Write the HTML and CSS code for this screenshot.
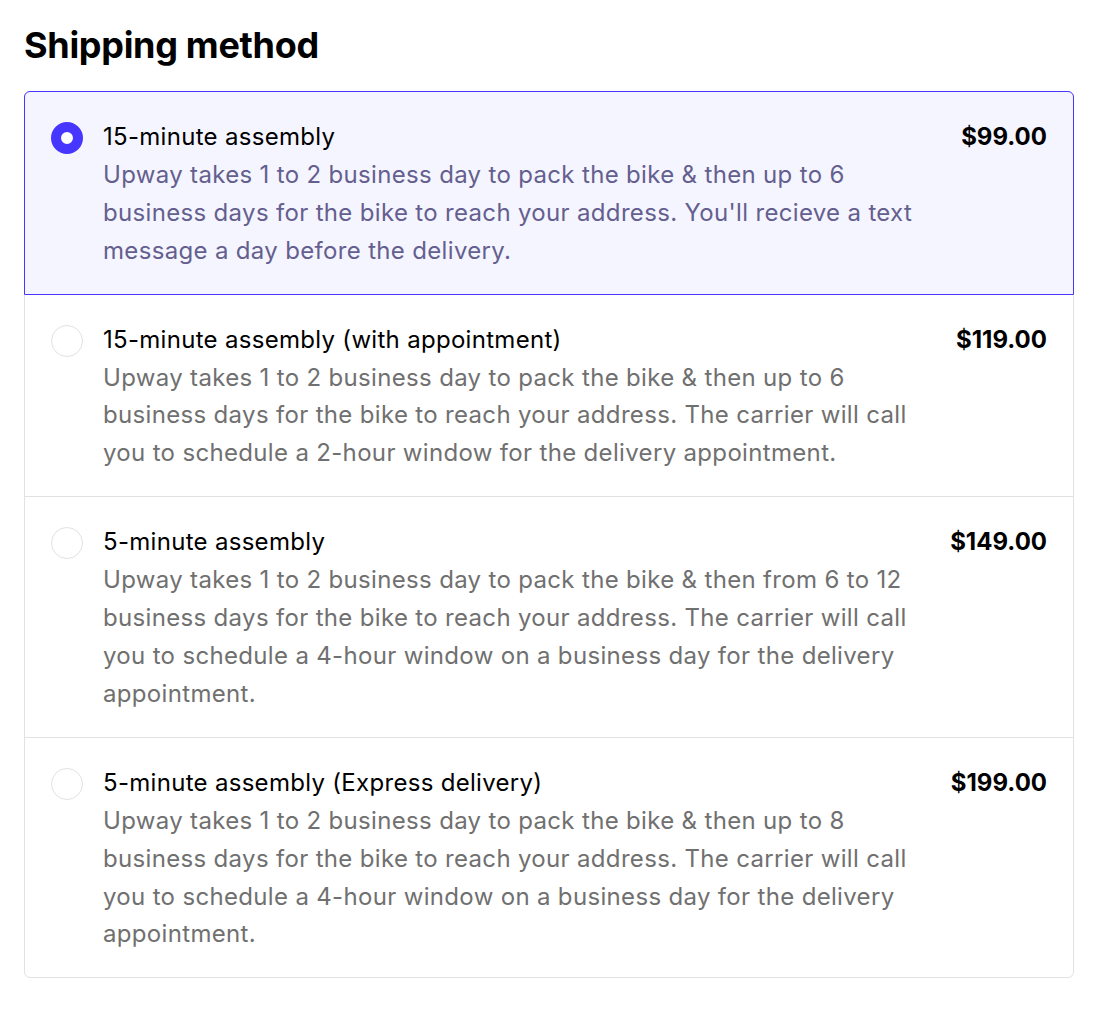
FILE: index.html
```html
<!DOCTYPE html>
<html lang="en">
<head>
  <meta charset="UTF-8" />
  <meta name="viewport" content="width=device-width, initial-scale=1.0">
  <title>Shipping method</title>
  <link rel="stylesheet" href="styles.css">
</head>
<body>

  <section class="shipping">
    <h2 class="shipping-title">Shipping method</h2>

    <div class="options">
      <!-- Option sélectionnée -->
      <label class="option selected">
        <span class="radio"></span>
        <span class="option-body">
          <span class="option-name">15-minute assembly</span>
          <span class="option-desc">Upway takes 1 to 2 business day to pack the bike &amp; then up to 6 business days for the bike to reach your address. You'll recieve a text message a day before the delivery.</span>
        </span>
        <span class="option-price">$99.00</span>
      </label>

      <label class="option">
        <span class="radio"></span>
        <span class="option-body">
          <span class="option-name">15-minute assembly (with appointment)</span>
          <span class="option-desc">Upway takes 1 to 2 business day to pack the bike &amp; then up to 6 business days for the bike to reach your address. The carrier will call you to schedule a 2-hour window for the delivery appointment.</span>
        </span>
        <span class="option-price">$119.00</span>
      </label>

      <label class="option">
        <span class="radio"></span>
        <span class="option-body">
          <span class="option-name">5-minute assembly</span>
          <span class="option-desc">Upway takes 1 to 2 business day to pack the bike &amp; then from 6 to 12 business days for the bike to reach your address. The carrier will call you to schedule a 4-hour window on a business day for the delivery appointment.</span>
        </span>
        <span class="option-price">$149.00</span>
      </label>

      <label class="option">
        <span class="radio"></span>
        <span class="option-body">
          <span class="option-name">5-minute assembly (Express delivery)</span>
          <span class="option-desc">Upway takes 1 to 2 business day to pack the bike &amp; then up to 8 business days for the bike to reach your address. The carrier will call you to schedule a 4-hour window on a business day for the delivery appointment.</span>
        </span>
        <span class="option-price">$199.00</span>
      </label>
    </div>
  </section>

</body>
</html>
```

FILE: styles.css
```css
:root {
  --accent: #4636ff;
  --selected-bg: #f5f5ff;
  --border: #e2e2e2;
  --text: #000000;
  --muted: #707070;
  --muted-accent: #645f8e;
}
body {
  margin: 0;
  font-family: Inter, "Noto Sans", sans-serif;
  color: var(--text);
  background: #ffffff;
}
.shipping {
  padding: 24px 30px 40px 24px;
}
.shipping-title {
  margin: 0 0 24px;
  font-size: 36px;
  line-height: 43px;
  font-weight: 700;
  letter-spacing: -0.3px;
}
.options {
  border: 1px solid var(--border);
  border-radius: 6px;
}
.option {
  display: flex;
  gap: 20px;
  padding: 26px 26px 24px 26px;
  border-bottom: 1px solid var(--border);
  cursor: pointer;
}
.option:last-child {
  border-bottom: none;
}
.option.selected {
  background: var(--selected-bg);
  border: 1px solid var(--accent);
  border-radius: 6px 6px 0 0;
  margin: -1px -1px 0;
}
.radio {
  flex: none;
  width: 30px;
  height: 30px;
  margin-top: 4px;
  border: 1px solid var(--border);
  border-radius: 50%;
  background: #ffffff;
  box-sizing: content-box;
}
.selected .radio {
  width: 12px;
  height: 12px;
  border: 10px solid var(--accent);
}
.option-body {
  flex: 1;
  display: flex;
  flex-direction: column;
  max-width: 810px;
  font-size: 24px;
  line-height: 37.9px;
}
.option-name {
  color: var(--text);
  letter-spacing: 0.3px;
}
.option-desc {
  color: var(--muted);
  letter-spacing: 0.33px;
}
.selected .option-desc {
  color: var(--muted-accent);
}
.option-price {
  flex: none;
  margin-left: auto;
  font-size: 24px;
  line-height: 37.9px;
  font-weight: 700;
}
```
